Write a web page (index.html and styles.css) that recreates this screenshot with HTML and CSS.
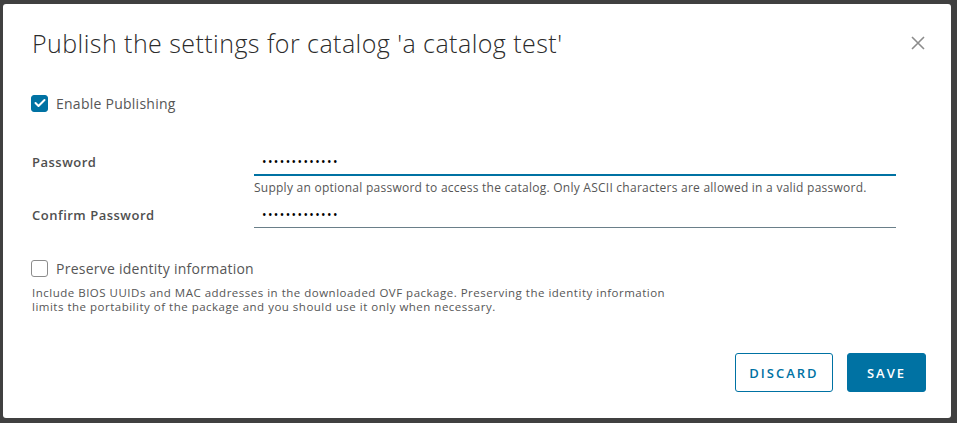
FILE: index.html
```html
<!DOCTYPE html>
<html>
<head>
<meta charset="utf-8">
<link rel="stylesheet" href="styles.css">
</head>
<body>
<div class="modal">
  <div class="modal-header">
    <h3 class="modal-title">Publish the settings for catalog 'a catalog test'</h3>
    <button class="close" aria-label="Close">
      <svg width="14" height="14" viewBox="0 0 14 14"><path d="M1 1 L13 13 M13 1 L1 13" stroke="#8c8c8c" stroke-width="1.6" fill="none"/></svg>
    </button>
  </div>
  <div class="modal-body">
    <label class="check-row enable">
      <span class="box checked">
        <svg width="12" height="10" viewBox="0 0 12 10"><path d="M1.5 5 L4.5 8 L10.5 2" stroke="#fff" stroke-width="2" fill="none" stroke-linecap="round" stroke-linejoin="round"/></svg>
      </span>
      <span class="check-label">Enable Publishing</span>
    </label>

    <div class="form-row pw">
      <div class="field-label">Password</div>
      <div class="field">
        <div class="input focused">•••••••••••••</div>
      </div>
    </div>
    <div class="helper">Supply an optional password to access the catalog. Only ASCII characters are allowed in a valid password.</div>
    <div class="form-row confirm">
      <div class="field-label">Confirm Password</div>
      <div class="field">
        <div class="input">•••••••••••••</div>
      </div>
    </div>

    <label class="check-row preserve">
      <span class="box"></span>
      <span class="check-label">Preserve identity information</span>
    </label>
    <p class="desc">Include BIOS UUIDs and MAC addresses in the downloaded OVF package. Preserving the identity information<br>limits the portability of the package and you should use it only when necessary.</p>
  </div>
  <div class="modal-footer">
    <button class="btn btn-outline">DISCARD</button>
    <button class="btn btn-primary">SAVE</button>
  </div>
</div>
</body>
</html>
```
FILE: styles.css
```css
html, body {
  margin: 0;
  padding: 0;
  background: #404040;
  width: 957px;
  height: 423px;
  overflow: hidden;
  font-family: "Open Sans", "Liberation Sans", sans-serif;
}
.modal {
  box-sizing: border-box;
  margin: 4px 0 0 3px;
  width: 948px;
  height: 414px;
  background: #fff;
  border-radius: 3px;
  display: flex;
  flex-direction: column;
  padding: 23px 25px 26px 26px;
}
.modal-header {
  display: flex;
  align-items: center;
  justify-content: space-between;
  height: 32px;
}
.modal-title {
  margin: 0 0 0 3px;
  font-weight: 300;
  font-size: 25px;
  letter-spacing: 0.45px;
  line-height: 32px;
  color: #2b2b2b;
}
.close {
  background: none;
  border: 0;
  padding: 0;
  width: 14px;
  height: 14px;
  margin-right: 1px;
  display: flex;
}
.modal-body {
  display: flex;
  flex-direction: column;
}
.check-row {
  display: flex;
  align-items: center;
  height: 20px;
}
.enable { margin-top: 34px; }
.preserve { margin-top: 30px; }
.box {
  box-sizing: border-box;
  width: 17px;
  height: 17px;
  border-radius: 3px;
  border: 1px solid #8c8c8c;
  margin-left: 2px;
  margin-right: 8px;
  display: flex;
  align-items: center;
  justify-content: center;
}
.box.checked {
  background: #0072a3;
  border-color: #0072a3;
}
.check-label {
  font-size: 14px;
  letter-spacing: 0.25px;
  color: #565656;
}
.form-row {
  display: flex;
  align-items: flex-start;
}
.pw { margin-top: 39px; }
.confirm { margin-top: 10px; }
.field-label {
  width: 222px;
  margin-left: 3px;
  font-size: 13px;
  font-weight: 600;
  letter-spacing: 0.5px;
  line-height: 20px;
  color: #4f4f4f;
}
.field { width: 642px; }
.input {
  height: 22px;
  line-height: 20px;
  padding-left: 8px;
  font-size: 12px;
  letter-spacing: 1.4px;
  color: #000;
  border-bottom: 1px solid #6a7f89;
}
.input.focused {
  border-bottom-color: #0072a3;
  box-shadow: 0 1px 0 #0072a3;
}
.helper {
  margin: 6px 0 0 225px;
  font-size: 12px;
  letter-spacing: 0.25px;
  line-height: 14px;
  color: #565656;
}
.desc {
  margin: 8px 0 0 3px;
  font-size: 11.5px;
  letter-spacing: 0.5px;
  line-height: 14px;
  color: #565656;
}
.modal-footer {
  margin-top: auto;
  display: flex;
  justify-content: flex-end;
  gap: 14px;
}
.btn {
  box-sizing: border-box;
  height: 39px;
  border-radius: 3px;
  font-family: "Open Sans", "Liberation Sans", sans-serif;
  font-size: 13px;
  font-weight: 600;
  letter-spacing: 2px;
  padding: 0;
  border: 1px solid #0072a3;
}
.btn-outline {
  background: #fff;
  color: #0072a3;
  width: 98px;
}
.btn-primary {
  background: #0072a3;
  color: #fff;
  width: 79px;
}
```
